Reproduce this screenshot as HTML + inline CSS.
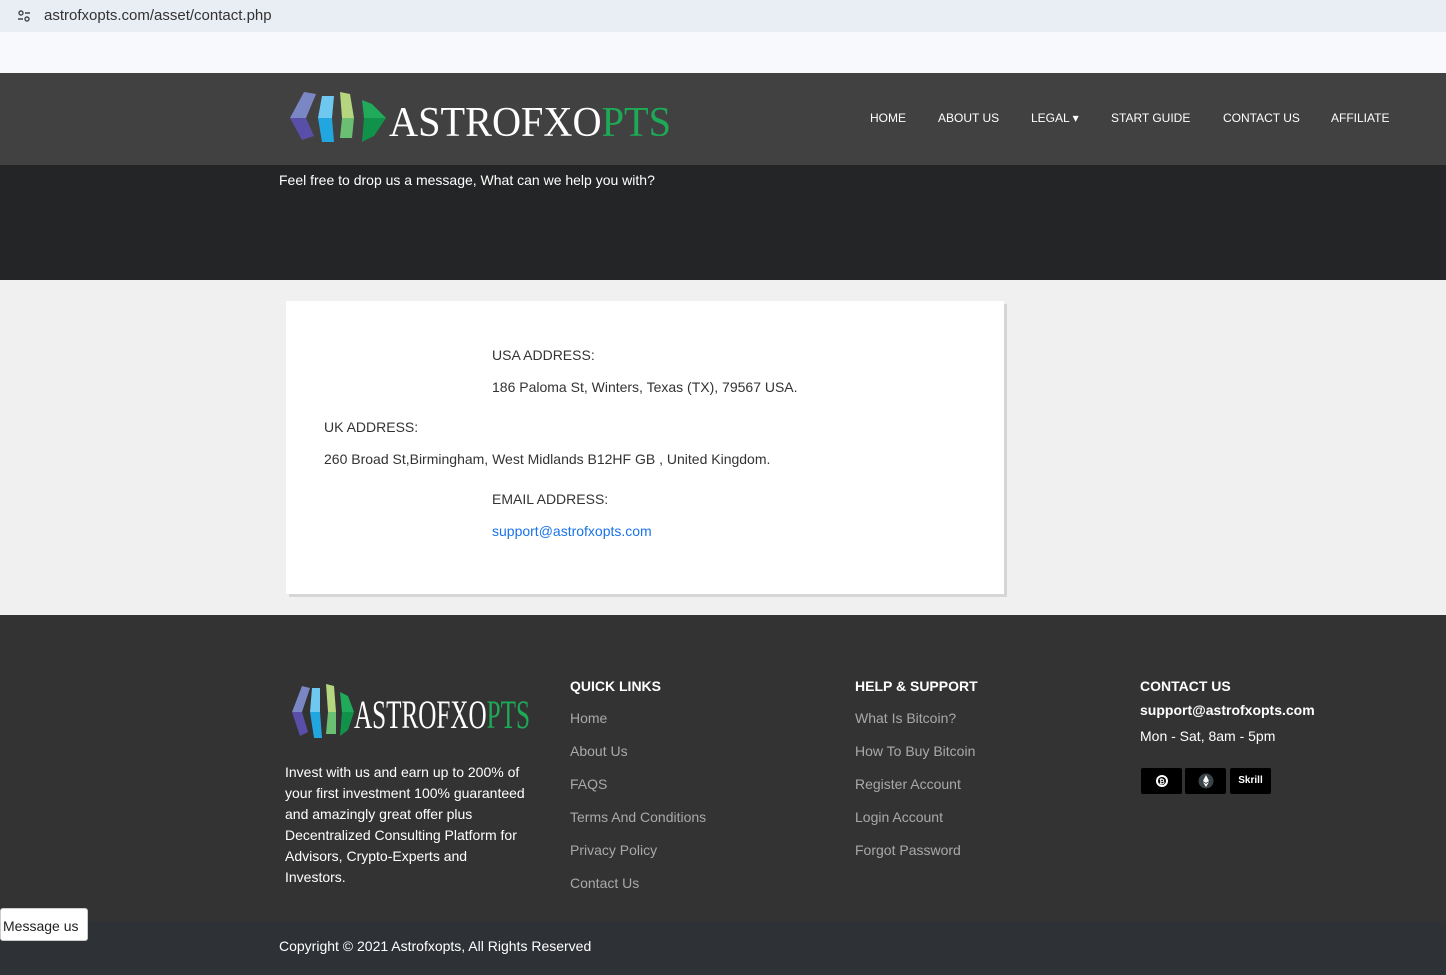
<!DOCTYPE html>
<html><head><meta charset="utf-8"><style>
*{margin:0;padding:0;box-sizing:border-box}
body{width:1446px;height:975px;overflow:hidden;font-family:"Liberation Sans",Arial,sans-serif;background:#f0f0f0;position:relative}
.abs{position:absolute}
.url{top:0;left:0;width:1446px;height:32px;background:#e9edf4}
.url span{position:absolute;left:44px;top:7px;font-size:15px;color:#333}
.band{top:32px;left:0;width:1446px;height:41px;background:#f8f9fc}
.hdr{top:73px;left:0;width:1446px;height:92px;background:#414141}
.nav{top:111px;font-size:12px;color:#fff}
.hero{top:165px;left:0;width:1446px;height:115px;background:#242526}
.card{top:301px;left:286px;width:718px;height:293px;background:#fff;box-shadow:3px 3px 0 #d6d6d6}
.t{font-size:14px;color:#333}
.foot{top:615px;left:0;width:1446px;height:307px;background:#333}
.bot{top:922px;left:0;width:1446px;height:53px;background:#2e3136}
.fh{font-size:14px;font-weight:bold;color:#fff}
.fl{font-size:14px;color:#a9a9a9}
.pay{top:768px;width:41px;height:26px;background:#000;border-radius:2px;color:#fff;font-size:10px;font-weight:bold;text-align:center;line-height:26px}
</style></head><body>
<div class="abs url"><svg style="position:absolute;left:17px;top:9px" width="14" height="14" viewBox="0 0 14 14" fill="none" stroke="#444" stroke-width="1.4"><circle cx="4" cy="4" r="2"/><path d="M8 4h5M1 10h5"/><circle cx="10" cy="10" r="2"/></svg><span>astrofxopts.com/asset/contact.php</span></div>
<div class="abs band"></div>
<div class="abs hdr"></div>
<svg class="abs" style="left:288px;top:90px" width="390" height="56" viewBox="0 0 390 56">
<polygon points="16,2 28,4 18,28 2,28" fill="#7b86c4"/><polygon points="2,28 18,28 26,46 14,50" fill="#5a4fa8"/>
<polygon points="34,6 46,6 44,28 30,28" fill="#6ec8f0"/><polygon points="30,28 44,28 46,52 34,52" fill="#22a6e0"/>
<polygon points="52,2 62,4 66,28 54,28" fill="#b5d67e"/><polygon points="54,28 66,28 64,48 52,48" fill="#6abf72"/>
<polygon points="74,10 84,14 98,28 76,28" fill="#1fab59"/><polygon points="76,28 98,28 86,46 74,52" fill="#11924a"/>
<text x="101" y="46" font-family="Liberation Serif,serif" font-size="42" fill="#fff" textLength="282" lengthAdjust="spacingAndGlyphs">ASTROFXO<tspan fill="#1ea957">PTS</tspan></text></svg>
<div class="abs nav" style="left:870px">HOME</div>
<div class="abs nav" style="left:938px">ABOUT US</div>
<div class="abs nav" style="left:1031px">LEGAL ▾</div>
<div class="abs nav" style="left:1111px">START GUIDE</div>
<div class="abs nav" style="left:1223px">CONTACT US</div>
<div class="abs nav" style="left:1331px">AFFILIATE</div>
<div class="abs hero"><div style="position:absolute;left:279px;top:7px;color:#fff;font-size:14px">Feel free to drop us a message, What can we help you with?</div></div>
<div class="abs card"></div>
<div class="abs t" style="left:492px;top:347px">USA ADDRESS:</div>
<div class="abs t" style="left:492px;top:379px">186 Paloma St, Winters, Texas (TX), 79567 USA.</div>
<div class="abs t" style="left:324px;top:419px">UK ADDRESS:</div>
<div class="abs t" style="left:324px;top:451px">260 Broad St,Birmingham, West Midlands B12HF GB , United Kingdom.</div>
<div class="abs t" style="left:492px;top:491px">EMAIL ADDRESS:</div>
<div class="abs t" style="left:492px;top:523px;color:#1a73e8">support@astrofxopts.com</div>
<div class="abs foot"></div>
<svg class="abs" style="left:290px;top:682px" width="245" height="58" viewBox="0 0 245 58">
<polygon points="12,4 20,6 12,30 2,30" fill="#7b86c4"/><polygon points="2,30 12,30 18,50 10,54" fill="#5a4fa8"/>
<polygon points="22,6 30,6 30,30 20,30" fill="#6ec8f0"/><polygon points="20,30 30,30 32,56 24,56" fill="#22a6e0"/>
<polygon points="36,2 44,4 46,30 38,30" fill="#b5d67e"/><polygon points="38,30 46,30 46,52 36,52" fill="#6abf72"/>
<polygon points="50,10 58,14 64,30 52,30" fill="#1fab59"/><polygon points="52,30 64,30 58,48 50,54" fill="#11924a"/>
<text x="64" y="46" font-family="Liberation Serif,serif" font-size="40" fill="#fff" textLength="176" lengthAdjust="spacingAndGlyphs">ASTROFXO<tspan fill="#1ea957">PTS</tspan></text></svg>
<div class="abs" style="left:285px;top:762px;width:244px;color:#fff;font-size:14px;line-height:21px">Invest with us and earn up to 200% of your first investment 100% guaranteed and amazingly great offer plus Decentralized Consulting Platform for Advisors, Crypto-Experts and Investors.</div>
<div class="abs fh" style="left:570px;top:678px">QUICK LINKS</div>
<div class="abs fl" style="left:570px;top:710px">Home</div>
<div class="abs fl" style="left:570px;top:743px">About Us</div>
<div class="abs fl" style="left:570px;top:776px">FAQS</div>
<div class="abs fl" style="left:570px;top:809px">Terms And Conditions</div>
<div class="abs fl" style="left:570px;top:842px">Privacy Policy</div>
<div class="abs fl" style="left:570px;top:875px">Contact Us</div>
<div class="abs fh" style="left:855px;top:678px">HELP &amp; SUPPORT</div>
<div class="abs fl" style="left:855px;top:710px">What Is Bitcoin?</div>
<div class="abs fl" style="left:855px;top:743px">How To Buy Bitcoin</div>
<div class="abs fl" style="left:855px;top:776px">Register Account</div>
<div class="abs fl" style="left:855px;top:809px">Login Account</div>
<div class="abs fl" style="left:855px;top:842px">Forgot Password</div>
<div class="abs fh" style="left:1140px;top:678px">CONTACT US</div>
<div class="abs fh" style="left:1140px;top:702px">support@astrofxopts.com</div>
<div class="abs" style="left:1140px;top:728px;color:#fff;font-size:14px">Mon - Sat, 8am - 5pm</div>
<div class="abs pay" style="left:1141px"><svg width="14" height="14" style="margin-top:6px" viewBox="0 0 14 14"><circle cx="7" cy="7" r="6" fill="#fff"/><circle cx="7" cy="7" r="4" fill="#000"/><text x="7" y="10" font-size="7" fill="#fff" text-anchor="middle" font-weight="bold">₿</text></svg></div>
<div class="abs pay" style="left:1185px"><svg width="16" height="16" style="margin-top:5px" viewBox="0 0 16 16"><circle cx="8" cy="8" r="7.5" fill="#3a4448"/><polygon points="8,2 11,8 8,10 5,8" fill="#fff"/><polygon points="5,9 8,11 11,9 8,14" fill="#fff"/></svg></div>
<div class="abs pay" style="left:1230px">Skrill</div>
<div class="abs bot"><div style="position:absolute;left:279px;top:16px;color:#fff;font-size:14px">Copyright © 2021 Astrofxopts, All Rights Reserved</div></div>
<div class="abs" style="left:0;top:908px;width:88px;height:33px;background:#fff;border:1px solid #ccc;border-radius:3px;font-size:14px;color:#222;padding:9px 0 0 2px">Message us</div>
</body></html>
